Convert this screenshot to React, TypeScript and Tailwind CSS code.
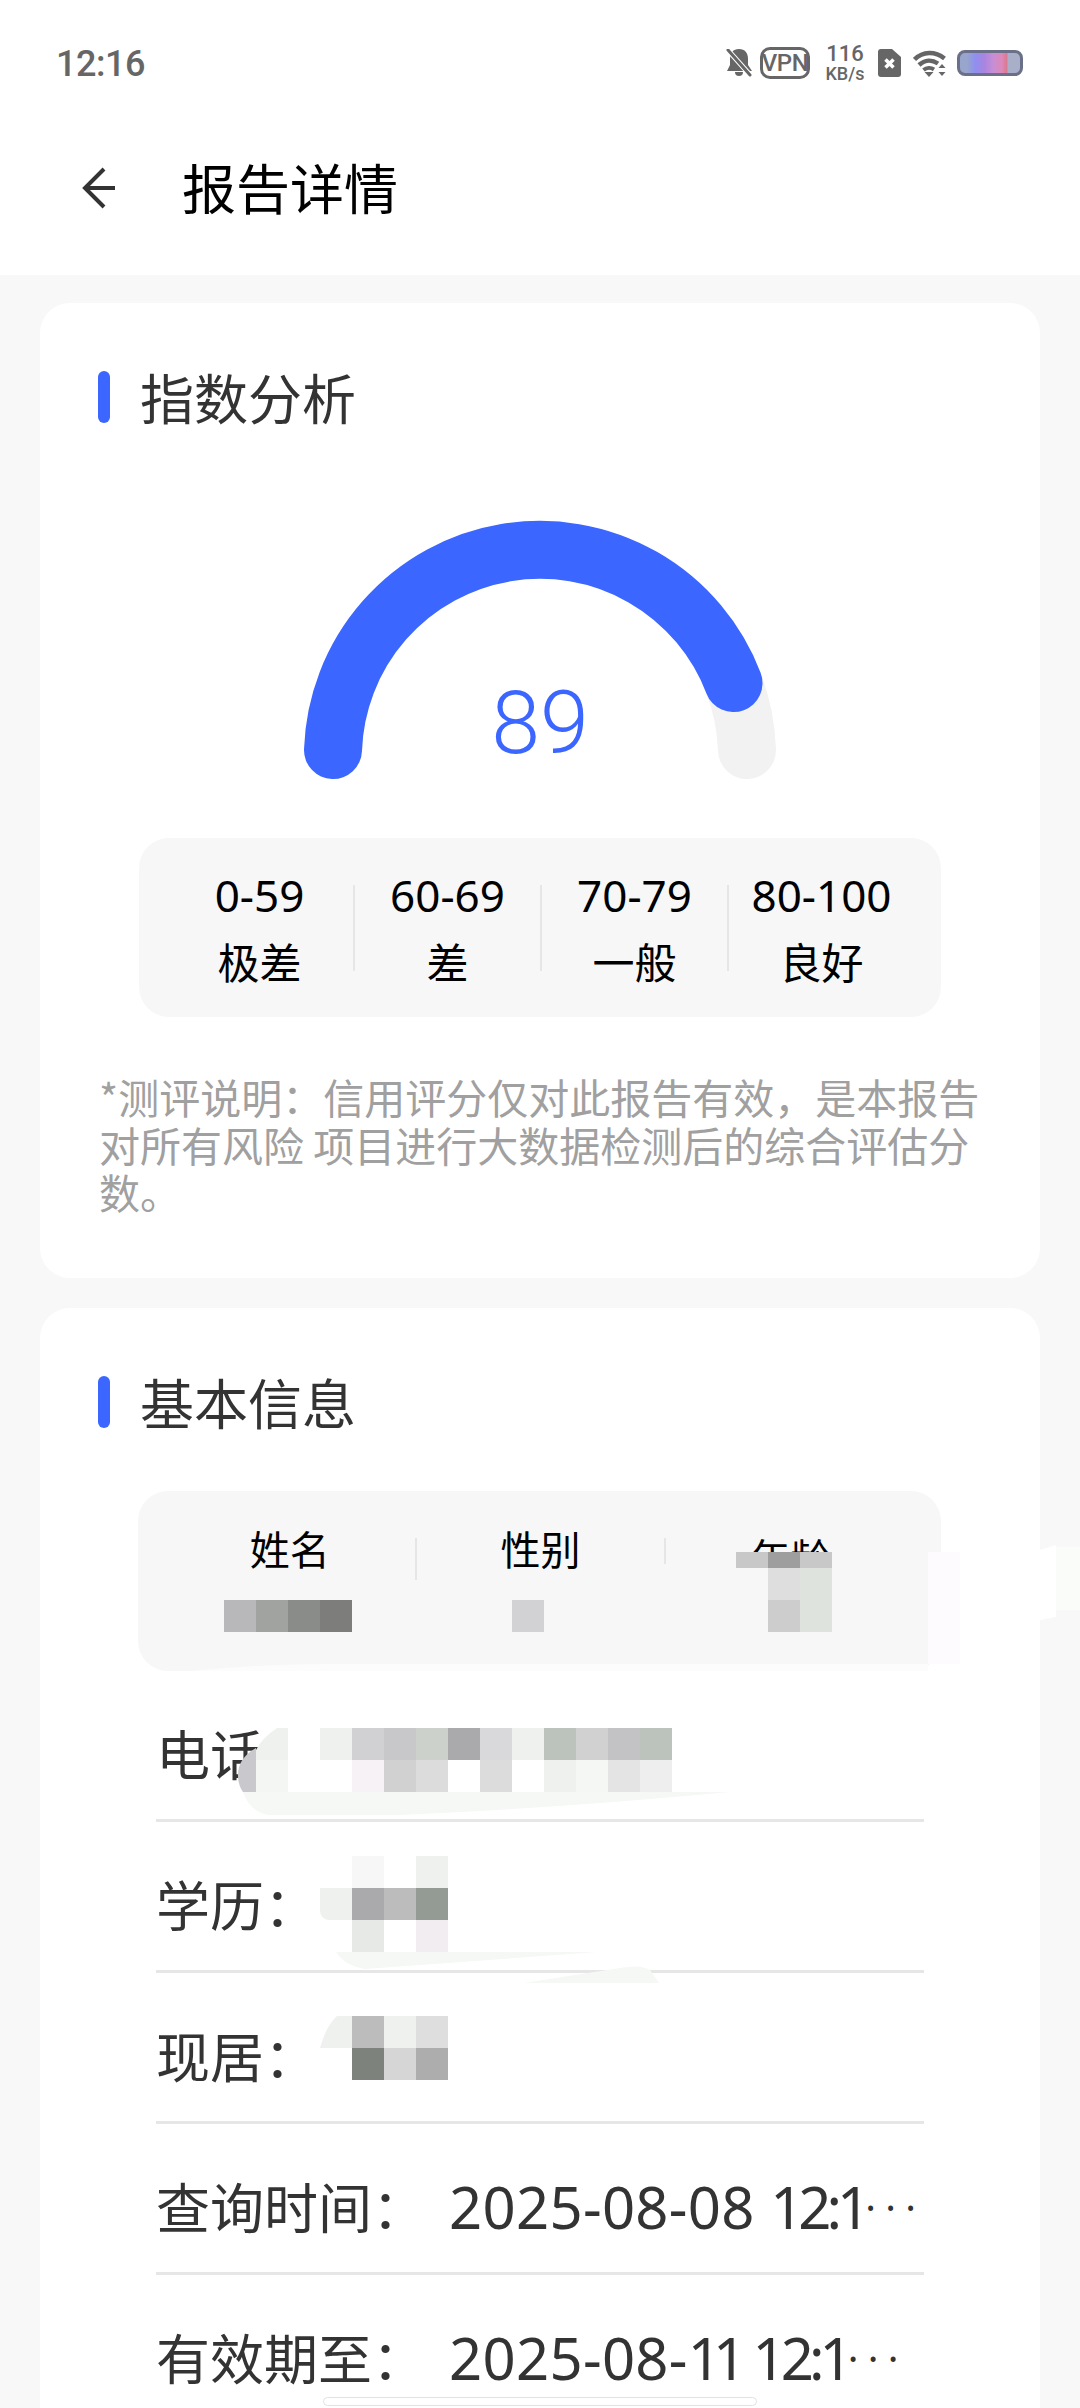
const cjk = 'font-["Noto_Sans_CJK_SC","Noto_Sans",sans-serif]';

const legend = [
  { range: '0-59', label: '极差' },
  { range: '60-69', label: '差' },
  { range: '70-79', label: '一般' },
  { range: '80-100', label: '良好' },
];

const rows = [
  { label: '电话：', date: '', time: '' },
  { label: '学历：', date: '', time: '' },
  { label: '现居：', date: '', time: '' },
  { label: '查询时间：', date: '2025-08-08', time: '12:1' },
  { label: '有效期至：', date: '2025-08-11', time: '12:1' },
];

function SectionTitle({ children }: { children: string }) {
  return (
    <div className="flex h-[52px] items-center">
      <div className="ml-[58px] h-[52px] w-[12px] rounded-full bg-[#3b66ff]" />
      <h2 className="ml-[30px] text-[54px] leading-[52px] font-normal text-[#333333]">{children}</h2>
    </div>
  );
}

function Gauge() {
  return (
    <div className="relative mx-auto mt-[92px] h-[270px] w-[480px]">
      <svg width="480" height="270" viewBox="300 515 480 270" fill="none">
        <path d="M733.500 683.100 A207.120 207.120 0 0 1 747 750" stroke="#f2f2f2" strokeWidth="58" strokeLinecap="round" />
        <path d="M333 750 A207.120 207.120 0 0 1 733.500 683.100" stroke="#3b66ff" strokeWidth="58" strokeLinecap="round" />
      </svg>
      <span className='absolute top-[161px] left-0 w-full text-center font-["Roboto",sans-serif] text-[88px] leading-[94px] font-light text-[#3b66ff]'>
        89
      </span>
    </div>
  );
}

function StatusBar() {
  return (
    <div className="flex h-[126px] items-center justify-between pr-[57px] pl-[56px]">
      <span className='mt-[2px] font-["Roboto",sans-serif] text-[36px] font-medium tracking-[-0.500px] text-[#666666]'>12:16</span>
      <div className="flex items-center text-[#666666]">
        <svg width="26" height="28" viewBox="0 0 26 28" fill="none">
          <path d="M13 0c6 0 9 4 9 10v6l4 6H1l3-6v-6c0-6 3-10 9-10z" fill="#666666" />
          <path d="M9 23h8a4 4 0 0 1-8 0z" fill="#666666" />
          <path d="M1 0l24 27" stroke="#ffffff" strokeWidth="5" />
          <path d="M2 1l22 25" stroke="#666666" strokeWidth="3" strokeLinecap="round" />
        </svg>
        <div className='ml-[8px] flex h-[32px] w-[50px] items-center justify-center rounded-[10px] border-[3px] border-[#666666] font-["Roboto",sans-serif] text-[24px] tracking-[-0.500px] font-medium'>
          VPN
        </div>
        <div className='ml-[16px] flex w-[38px] flex-col items-center font-["Roboto",sans-serif] font-medium'>
          <span className="text-[22px] leading-[22px]">116</span>
          <span className="text-[18px] leading-[18px]">KB/s</span>
        </div>
        <svg className="ml-[14px]" width="23" height="28" viewBox="0 0 23 28">
          <path d="M3 0h11l9 8v17a3 3 0 0 1-3 3H3a3 3 0 0 1-3-3V3a3 3 0 0 1 3-3z" fill="#666666" />
          <path d="M7.500 10.500l8 8M15.500 10.500l-8 8" stroke="#ffffff" strokeWidth="3.500" />
        </svg>
        <svg className="ml-[12px]" width="33" height="27" viewBox="0 0 33 27" fill="none">
          <path d="M1.500 9.500C10 1 22 1 31.500 8.500" stroke="#666666" strokeWidth="4.500" />
          <path d="M6 15c6-5.500 13-5.500 19-1.500" stroke="#666666" strokeWidth="4.500" />
          <path d="M10.500 20c3-2.500 7.500-2.500 10.500-.5" stroke="#666666" strokeWidth="4" />
          <path d="M11.500 22h9l-4.500 5z" fill="#666666" />
          <path d="M29 14l3.500 4h-7zM29 26l3.500-4h-7z" fill="#666666" />
        </svg>
        <div className="ml-[11px] h-[26px] w-[66px] rounded-[8px] border-[3px] border-[#6a7088] bg-[linear-gradient(90deg,#98a5cc_0%,#98a5cc_12%,#8f90f0_25%,#a884e0_40%,#c68ed6_55%,#dd88b8_70%,#d97890_78%,#a9afc9_80%,#a9afc9_100%)]" />
      </div>
    </div>
  );
}

// pixelated patches over the personal data
function Mosaic({ className, cols, cells }: { className: string; cols: string; cells: string[] }) {
  return (
    <div className={`absolute grid auto-rows-[32px] ${cols} ${className}`}>
      {cells.map((c, i) => (
        <div key={i} className={c} />
      ))}
    </div>
  );
}

function Redactions() {
  return (
    <>
      <svg className="absolute top-0 left-0" width="1080" height="2408" viewBox="0 0 1080 2408">
        <path d="M277 1728H288V1760H256V1750Q262 1738 277 1728Z" fill="#eef1ee" />
        <path d="M256 1748Q238 1758 238 1775Q238 1785 243 1792H256Z" fill="#c9c8cc" />
        <path d="M256 1760H288V1792H256Z" fill="#f3f6f3" />
        <path d="M243 1792Q250 1812 268 1815L400 1815Q560 1808 730 1792Z" fill="#f5f8f5" />
        <path d="M336 1952Q345 1966 365 1969L597 1952Z" fill="#f5f8f5" />
        <path d="M524 1983L620 1968Q640 1964 650 1970L659 1983Z" fill="#f5f8f5" />
        <path d="M320 2048Q326 2026 337 2016H352V2048Z" fill="#eef1ee" />
        <path d="M320 1888H352V1920H328Q320 1918 320 1910Z" fill="#eef1ee" />
        <path d="M190 1671Q260 1664 330 1664H928V1671Z" fill="#fcfcfc" />
        <path d="M655 1564H675V1582H655Z" fill="#f7f7f7" />
        <path d="M928 1552H960V1664H928Z" fill="#fefbfe" />
        <path d="M960 1552H1040V1664H960Z" fill="#ffffff" />
        <path d="M1040 1550L1056 1545V1617L1040 1620Z" fill="#ffffff" />
        <path d="M1056 1547H1080V1610H1056Z" fill="#f9fcf9" />
      </svg>
      <Mosaic
        className="top-[1600px] left-[224px]"
        cols="grid-cols-[repeat(4,32px)]"
        cells={['bg-[#b8b7b9]', 'bg-[#a0a39f]', 'bg-[#8a8c89]', 'bg-[#7d7e7c]']}
      />
      <div className="absolute top-[1600px] left-[512px] h-[32px] w-[32px] bg-[#d2d2d4]" />
      <div className="absolute top-[1552px] left-[736px] flex">
        <div className="h-[16px] w-[32px] bg-[#c8c8c8]" />
        <div className="h-[16px] w-[32px] bg-[#9e9e9e]" />
        <div className="h-[16px] w-[32px] bg-[#c8c8c8]" />
      </div>
      <Mosaic
        className="top-[1568px] left-[768px]"
        cols="grid-cols-[repeat(2,32px)]"
        cells={['bg-[#dedede]', 'bg-[#dfe3de]', 'bg-[#cdcdcd]', 'bg-[#dfe3de]']}
      />
      <Mosaic
        className="top-[1728px] left-[288px]"
        cols="grid-cols-[repeat(13,32px)]"
        cells={[
          'bg-white', 'bg-[#eef1ee]', 'bg-[#d1d0d3]', 'bg-[#c8c7ca]', 'bg-[#cdd1cc]', 'bg-[#aaa9ab]', 'bg-[#d9d8da]',
          'bg-[#eef1ee]', 'bg-[#bcc2bc]', 'bg-[#d1d1d1]', 'bg-[#c3c2c4]', 'bg-[#bcc2bc]', 'bg-transparent',
          'bg-white', 'bg-white', 'bg-[#f6f2f5]', 'bg-[#d1d1d1]', 'bg-[#dcdcdc]', 'bg-white', 'bg-[#dcdcdc]',
          'bg-white', 'bg-[#eef1ee]', 'bg-[#f4f7f4]', 'bg-[#e4e4e4]', 'bg-[#eeeeee]', 'bg-transparent',
        ]}
      />
      <Mosaic
        className="top-[1856px] left-[320px]"
        cols="grid-cols-[repeat(4,32px)]"
        cells={[
          'bg-transparent', 'bg-[#f7f7f7]', 'bg-white', 'bg-[#eef1ee]',
          'bg-transparent', 'bg-[#aaa9ab]', 'bg-[#bcbcbc]', 'bg-[#949a94]',
          'bg-transparent', 'bg-[#e6e9e6]', 'bg-white', 'bg-[#f1edf1]',
        ]}
      />
      <Mosaic
        className="top-[2016px] left-[352px]"
        cols="grid-cols-[repeat(3,32px)]"
        cells={['bg-[#bcbcbc]', 'bg-[#eef1ee]', 'bg-[#dedede]', 'bg-[#7d827d]', 'bg-[#d6d6d6]', 'bg-[#adadad]']}
      />
    </>
  );
}

function DateValue({ date, time }: { date: string; time: string }) {
  // the "1"s are much narrower in the phone's font
  const narrow = date.endsWith('11');
  return (
    <span className='whitespace-nowrap font-["Noto_Sans",sans-serif] text-[58px] leading-[54px] tracking-[0.300px]'>
      {narrow ? (
        <>
          {date.slice(0, -2)}
          <span className="tracking-[-8px]">1</span>
          <span className="tracking-[-9px]">1</span>
        </>
      ) : (
        date
      )}
      <span> </span>
      <span className="tracking-[-5px]">{time}</span>
      <span className="inline-block -translate-y-[7px] text-[40px] tracking-[9.300px]">···</span>
    </span>
  );
}

export default function App() {
  return (
    <div className={`relative h-[2408px] w-[1080px] overflow-hidden bg-[#f8f8f8] ${cjk}`}>
      <header className="h-[275px] bg-white">
        <StatusBar />
        <div className="flex items-start pt-[34px]">
          <svg className="mt-[7px] ml-[82px]" width="34" height="42" viewBox="0 0 34 42" fill="none">
            <path d="M22 2L3 21L22 40M3 21H33" stroke="#333333" strokeWidth="4" />
          </svg>
          <h1 className="ml-[66px] text-[54px] leading-[54px] font-normal text-black">报告详情</h1>
        </div>
      </header>

      <section className="mx-[40px] mt-[28px] h-[975px] rounded-[30px] bg-white pt-[68px]">
        <SectionTitle>指数分析</SectionTitle>
        <Gauge />
        <div className="mt-[53px] ml-[99px] flex h-[179px] w-[802px] items-center rounded-[30px] bg-[#f7f7f7] px-[27px]">
          {legend.map((item, i) => (
            <div key={item.range} className="flex flex-1 items-center">
              {i > 0 && <div className="h-[86px] w-[2px] bg-[#e6e6e6]" />}
              <div className="flex-1 text-center text-black">
                <p className='font-["Noto_Sans",sans-serif] text-[44px] leading-[60px]'>{item.range}</p>
                <p className="mt-[6px] text-[42px] leading-[60px]">{item.label}</p>
              </div>
            </div>
          ))}
        </div>
        <p className="mt-[56px] ml-[59px] w-[885px] text-[41px] leading-[47.500px] text-[#a0a0a0]">
          *测评说明：信用评分仅对此报告有效，是本报告对所有风险 项目进行大数据检测后的综合评估分数。
        </p>
      </section>

      <section className="mx-[40px] mt-[30px] h-[1140px] rounded-[30px] bg-white pt-[68px]">
        <SectionTitle>基本信息</SectionTitle>
        <div className="mt-[63px] ml-[98px] flex h-[180px] w-[803px] items-start rounded-[30px] bg-[#f7f7f7] px-[27px] pt-[47px]">
          {['姓名', '性别', '年龄'].map((name, i) => (
            <div key={name} className="flex flex-1 items-start">
              {i > 0 && <div className="h-[42px] w-[2px] bg-[#e6e6e6]" />}
              <p className={`flex-1 text-center text-[40px] leading-[40px] text-black ${i === 2 ? 'mt-[-2px]' : 'mt-[-10px]'}`}>
                {name}
              </p>
            </div>
          ))}
        </div>
        <div className="ml-[116px] w-[768px]">
          {rows.map((row, i) => (
            <div
              key={row.label}
              className={`flex h-[151px] items-baseline pt-[55px] text-[54px] leading-[54px] text-[#333333] ${i < rows.length - 1 ? 'border-b-[3px] border-[#e6e6e6]' : ''}`}
            >
              <span className="w-[293px] shrink-0">{row.label}</span>
              {row.date && <DateValue date={row.date} time={row.time} />}
            </div>
          ))}
        </div>
      </section>

      <Redactions />
      <div className="absolute top-[2397px] left-[323px] h-[9px] w-[434px] rounded-full border border-[#e2e2e2] bg-white" />
    </div>
  );
}
